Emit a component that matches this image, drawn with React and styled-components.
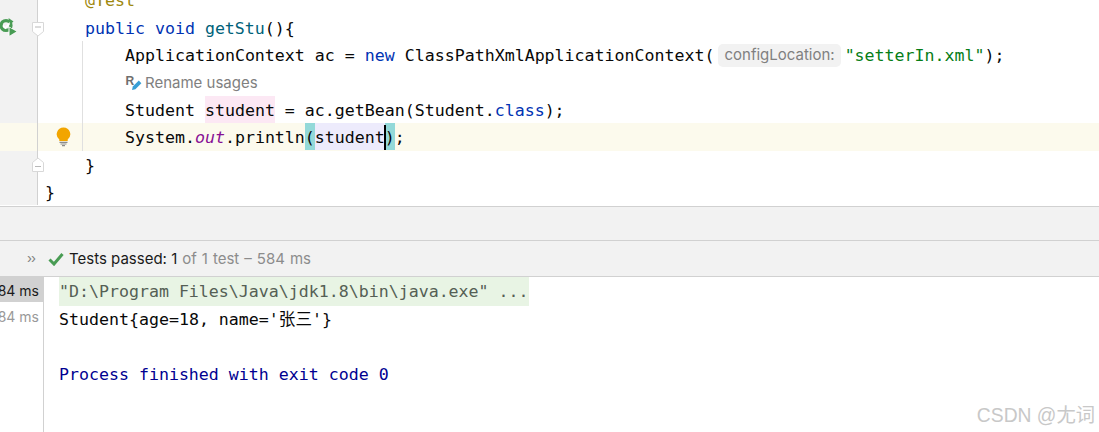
import React from "react";
import styled, { createGlobalStyle } from "styled-components";

const MONO = `"DejaVu Sans Mono", "Noto Sans CJK SC", monospace`;
const UI = `Inter, "Noto Sans", sans-serif`;

const GlobalStyle = createGlobalStyle`
  html, body {
    margin: 0;
    padding: 0;
    background: #fff;
  }
`;

const Page = styled.div`
  position: relative;
  width: 1099px;
  height: 432px;
  overflow: hidden;
  display: flex;
  flex-direction: column;
  background: #fff;
`;

/* =========================
   Editor
========================= */

const Editor = styled.div`
  height: 207px;
  flex: none;
  padding-bottom: 0.6px;
  box-sizing: border-box;
  display: flex;
  flex-direction: column;
  justify-content: flex-end;
  overflow: hidden;
  border-bottom: 1px solid #d1d1d1;
`;

const Line = styled.div`
  position: relative;
  flex: none;
  height: 27.4px;
  display: flex;
  background: ${(p) => (p.$current ? "#fcfaed" : "transparent")};
`;

const Gutter = styled.div`
  position: relative;
  flex: none;
  width: 37px;
  background: ${(p) => (p.$current ? "#fcfaed" : "#f2f2f2")};
  border-right: 1px solid #d1d1d1;
`;

const Margin = styled.div`
  position: relative;
  flex: none;
  width: 44px;
`;

const Code = styled.div`
  flex: 1;
  height: 100%;
  padding-left: ${(p) => (p.$indent || 0) * 40 + 2}px;
  margin-left: ${(p) => (p.$outer ? -40 : 0)}px;
  border-left: 1px solid ${(p) => (p.$guide ? "#e0e0e0" : "transparent")};
  font: 16.6px/30px ${MONO};
  color: #080808;
  white-space: pre;
`;

const Keyword = styled.span`
  color: #0033b3;
`;

const Method = styled.span`
  color: #00627a;
`;

const Annotation = styled.span`
  color: #9e880d;
`;

const StringText = styled.span`
  color: #067d17;
`;

const StaticField = styled.span`
  color: #871094;
  font-style: italic;
`;

const WriteMark = styled.span`
  display: inline-block;
  height: 27px;
  background: #fce8f4;
`;

const UsageMark = styled.span`
  position: relative;
  display: inline-block;
  height: 27px;
  background: #edebfc;
`;

const BraceMark = styled.span`
  display: inline-block;
  height: 27px;
  background: #93d9d9;
`;

const Caret = styled.i`
  position: absolute;
  right: -1px;
  top: 2px;
  width: 2px;
  height: 25px;
  background: #000;
`;

const Hint = styled.span`
  display: inline-block;
  height: 23px;
  margin: 0 4px 0 4px;
  padding: 0 6px;
  border-radius: 5px;
  background: #f2f2f2;
  color: #808080;
  font: 15px/22px ${UI};
  vertical-align: 1px;
`;

const Usages = styled.div`
  display: flex;
  align-items: center;
  gap: 1px;
  height: 100%;
  box-sizing: border-box;
  padding-top: 1px;
  color: #808080;
  font: 15px/27px ${UI};
`;

const RunIcon = styled.svg`
  position: absolute;
  left: 0;
  top: 4px;
  width: 17px;
  height: 18px;
`;

const FoldIcon = styled.svg`
  position: absolute;
  left: -6px;
  top: ${(p) => p.$top}px;
  width: 12px;
  height: 15px;
`;

const BulbIcon = styled.svg`
  position: absolute;
  left: 18px;
  top: 4px;
  width: 15px;
  height: 20px;
`;

/* =========================
   Tool window
========================= */

const Spacer = styled.div`
  flex: none;
  height: 34px;
  box-sizing: border-box;
  background: #f2f2f2;
  border-bottom: 1px solid #d1d1d1;
`;

const Toolbar = styled.div`
  flex: none;
  height: 36px;
  display: flex;
  align-items: center;
  box-sizing: border-box;
  padding-left: 27px;
  background: #f2f2f2;
  border-bottom: 1px solid #d1d1d1;
  font: 15px/1 ${UI};
  color: #1a1a1a;
  white-space: pre;
`;

const Chevrons = styled.span`
  width: 21px;
  color: #808080;
  font: 13px/1 ${UI};
  letter-spacing: -1px;
`;

const CheckIcon = styled.svg`
  width: 16px;
  height: 14px;
  margin-right: 5px;
`;

const Muted = styled.span`
  color: #8c8c8c;
  word-spacing: 0.8px;
`;

const Results = styled.div`
  flex: 1;
  display: flex;
`;

const Durations = styled.div`
  flex: none;
  width: 43px;
  border-right: 1px solid #d1d1d1;
  overflow: hidden;
`;

const Duration = styled.div`
  height: 25px;
  box-sizing: border-box;
  padding: ${(p) => (p.$selected ? 2 : 3)}px 4px 0 0;
  margin-bottom: 1px;
  display: flex;
  justify-content: flex-end;
  align-items: center;
  background: ${(p) => (p.$selected ? "#d1d1d1" : "transparent")};
  color: ${(p) => (p.$selected ? "#1a1a1a" : "#999")};
  font: 14px/1 ${UI};
  white-space: nowrap;
`;

const Console = styled.div`
  flex: 1;
  padding-left: 15px;
  font: 16.6px/29px ${MONO};
  color: #080808;
  white-space: pre;
`;

const CommandLine = styled.div`
  display: table;
  height: 28px;
  background: #e8f4e4;
  color: #555f55;
`;

const OutputLine = styled.div`
  height: 27.6px;
  line-height: 28px;
  color: ${(p) => p.$color || "inherit"};
`;

const Watermark = styled.div`
  position: absolute;
  right: 4px;
  bottom: 7px;
  color: #c8c8c8;
  font: 19.3px/1 "Liberation Sans", "Noto Sans CJK SC", sans-serif;
`;

const App = () => (
  <Page>
    <GlobalStyle />
    <Editor>
      <Line>
        <Gutter />
        <Margin />
        <Code><Annotation>@Test</Annotation></Code>
      </Line>
      <Line>
        <Gutter>
          <RunIcon viewBox="0 0 17 18">
            <circle cx="6" cy="7.5" r="4.9" fill="none" stroke="#499c54" strokeWidth="3.4" />
            <path d="M3 7.5l2.4 2.5 5-5.6" fill="none" stroke="#fff" strokeWidth="1.8" />
            <path d="M8.5 0l5 3.5-3.5 3z" fill="#499c54" />
            <path d="M9 9l7.5 4.5L9 18z" fill="#fff" stroke="#fff" />
            <path d="M9.5 9.5l7 4-7 4.2z" fill="#499c54" />
          </RunIcon>
        </Gutter>
        <Margin>
          <FoldIcon $top={8} viewBox="0 0 12 15">
            <path d="M.5.5h11v9L6 14 .5 9.5z" fill="#fff" stroke="#d8d8d8" />
            <path d="M3 5h6" stroke="#b8b8b8" />
          </FoldIcon>
        </Margin>
        <Code><Keyword>public void </Keyword><Method>getStu</Method>(){"{"}</Code>
      </Line>
      <Line>
        <Gutter />
        <Margin />
        <Code $guide $indent={1}>
          ApplicationContext ac = <Keyword>new</Keyword> ClassPathXmlApplicationContext(
          <Hint>configLocation:</Hint>
          <StringText>"setterIn.xml"</StringText>);
        </Code>
      </Line>
      <Line>
        <Gutter />
        <Margin />
        <Code $guide $indent={1}>
          <Usages>
            <svg width="19" height="18" viewBox="0 0 19 18">
              <text x="0.5" y="10.5" fontFamily="Liberation Sans" fontWeight="700" fontSize="12" fill="#6e6e6e">R</text>
              <path d="M7 16l.8-3.4 6-6 2.6 2.6-6 6z" fill="#389fd6" />
            </svg>
            Rename usages
          </Usages>
        </Code>
      </Line>
      <Line>
        <Gutter />
        <Margin />
        <Code $guide $indent={1}>
          Student <WriteMark>student</WriteMark> = ac.getBean(Student.<Keyword>class</Keyword>);
        </Code>
      </Line>
      <Line $current>
        <Gutter $current />
        <Margin>
          <BulbIcon viewBox="0 0 15 20">
            <path d="M7.5.5a6.8 6.8 0 0 0-4.2 12.1V14h8.4v-1.4A6.8 6.8 0 0 0 7.5.5z" fill="#f2a500" />
            <path d="M3.5 15.3h8M4.5 17h6M6 18.6h3" stroke="#8c8c8c" strokeWidth="1.2" />
          </BulbIcon>
        </Margin>
        <Code $guide $indent={1}>
          System.<StaticField>out</StaticField>.println<BraceMark>(</BraceMark>
          <UsageMark>student<Caret /></UsageMark>
          <BraceMark>)</BraceMark>;
        </Code>
      </Line>
      <Line>
        <Gutter />
        <Margin>
          <FoldIcon $top={6} viewBox="0 0 12 15">
            <path d="M.5 14.5h11v-9L6 1 .5 5.5z" fill="#fff" stroke="#d8d8d8" />
            <path d="M3 9.5h6" stroke="#b8b8b8" />
          </FoldIcon>
        </Margin>
        <Code>{"}"}</Code>
      </Line>
      <Line>
        <Gutter />
        <Margin />
        <Code $outer>{"}"}</Code>
      </Line>
    </Editor>

    <Spacer />

    <Toolbar>
      <Chevrons>››</Chevrons>
      <CheckIcon viewBox="0 0 16 14">
        <path d="M1.5 7.5l4.5 4.5 8.5-10" fill="none" stroke="#499c54" strokeWidth="3" />
      </CheckIcon>
      Tests passed: 1<Muted> of 1 test – 584 ms</Muted>
    </Toolbar>

    <Results>
      <Durations>
        <Duration $selected>584 ms</Duration>
        <Duration>584 ms</Duration>
      </Durations>
      <Console>
        <CommandLine>"D:\Program Files\Java\jdk1.8\bin\java.exe" ...</CommandLine>
        <OutputLine>Student{"{"}age=18, name='张三'{"}"}</OutputLine>
        <OutputLine />
        <OutputLine $color="#000091">Process finished with exit code 0</OutputLine>
      </Console>
    </Results>

    <Watermark>CSDN @尢词</Watermark>
  </Page>
);

export default App;
